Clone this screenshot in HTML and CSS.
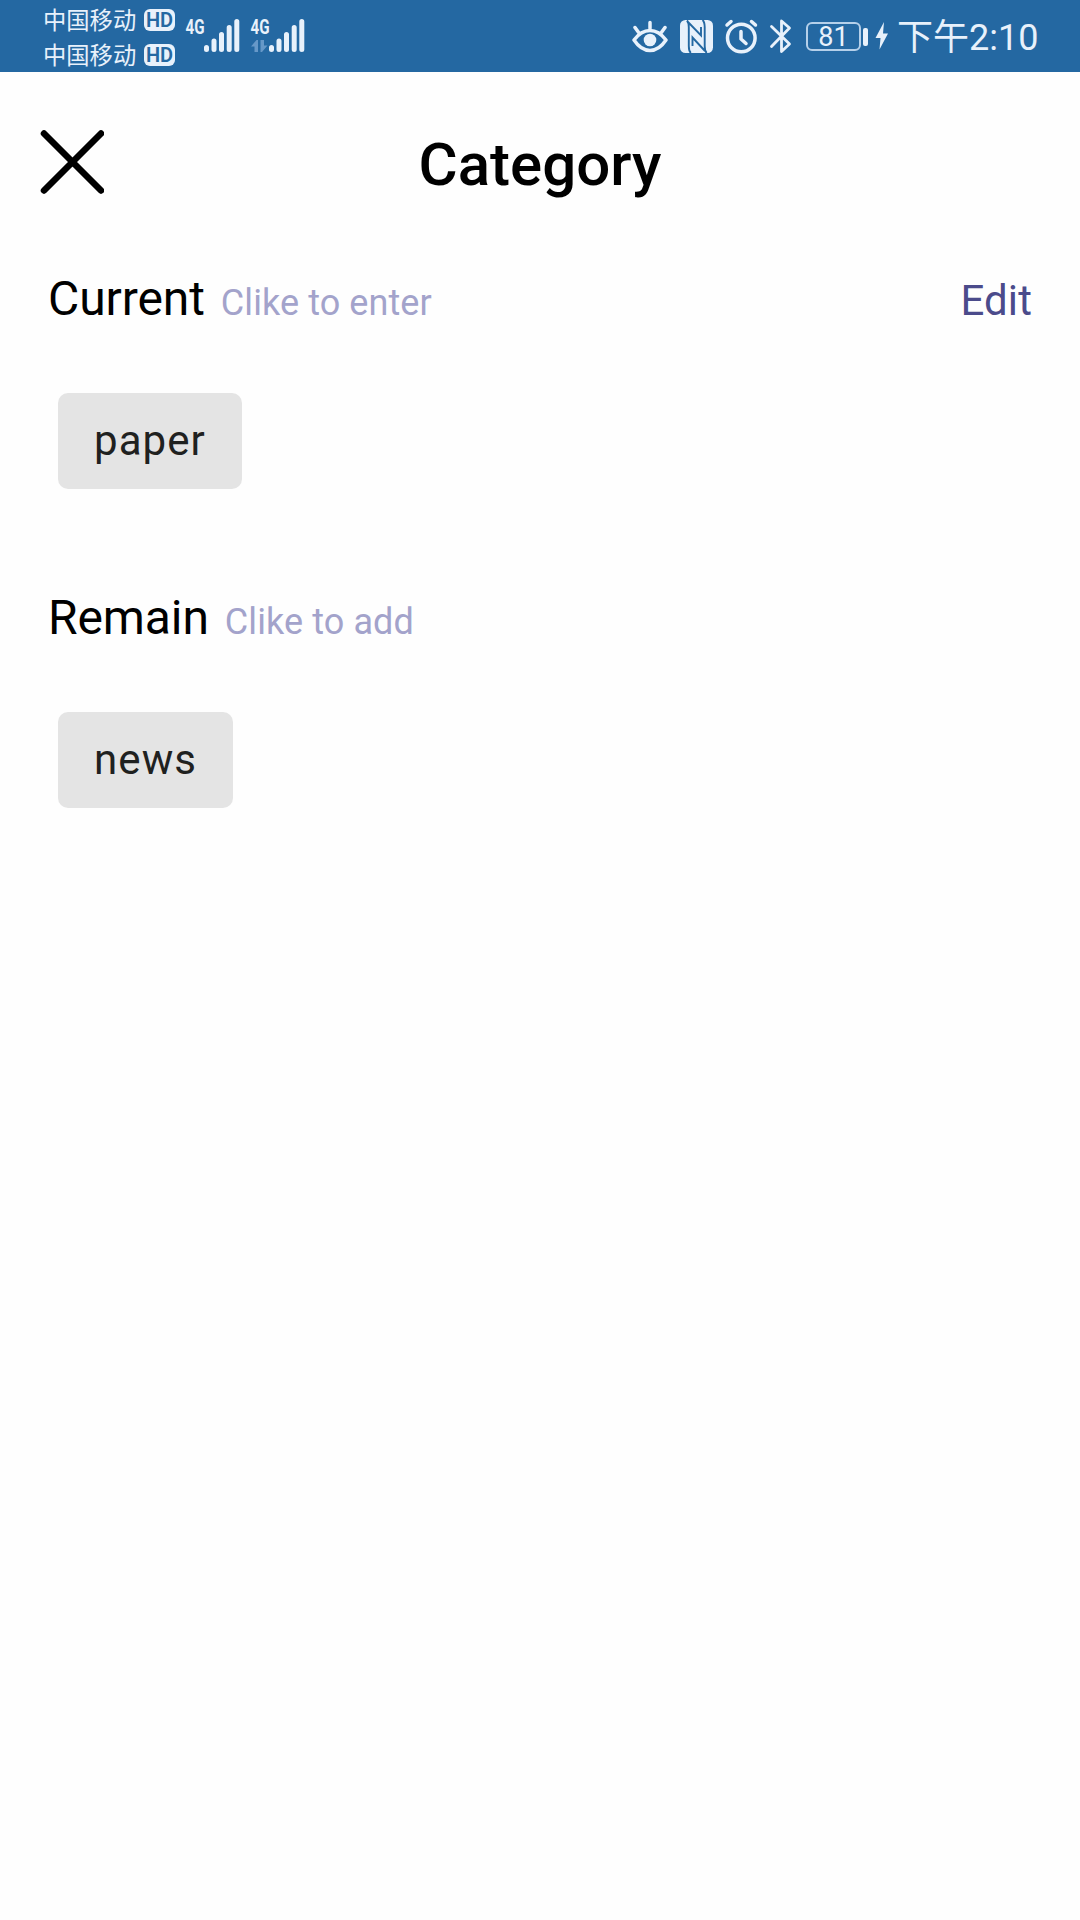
FILE: index.html
```html
<!DOCTYPE html>
<html lang="en">
<head>
<meta charset="utf-8">
<title>Category</title>
<link rel="stylesheet" href="styles.css">
</head>
<body>
<header class="status">
  <div class="carriers">
    <div class="carrier"><span class="carrier-name">中国移动</span><span class="hd"><span class="hd-text">HD</span></span></div>
    <div class="carrier"><span class="carrier-name">中国移动</span><span class="hd"><span class="hd-text">HD</span></span></div>
  </div>
  <svg class="signals" width="120" height="72" viewBox="185 0 120 72">
    <g class="net">
      <text x="185.5" y="33.5" textLength="19" lengthAdjust="spacingAndGlyphs">4G</text>
      <text x="250.5" y="33.5" textLength="19" lengthAdjust="spacingAndGlyphs">4G</text>
    </g>
    <g class="bars">
      <path d="M206.500 47.500v2M214 41v8.500M221.500 34.500v15M229.200 27.500v22M236.800 21.500v28"/>
      <path d="M271.500 47.500v2M279 41v8.500M286.500 34.500v15M294.200 27.500v22M301.800 21.500v28"/>
    </g>
    <path class="traffic" d="M251 46.500l5.500-6.500h1.500v12h-3.500v-5.500zM260.500 40h3.500v5.500h3.500l-5.500 6.500h-1.500z"/>
  </svg>
  <div class="indicators">
    <svg width="36" height="36" viewBox="632 18 36 36">
      <path class="line" d="M634 40Q641 30.500 650 30.500T666 40Q659 50.500 650 50.500T634 40zM650 22.500v6M635 27.500l4 5.500M665 27.500l-4 5.500"/>
      <circle class="solid" cx="650" cy="40" r="6.300"/>
    </svg>
    <svg class="nfc" width="33" height="36" viewBox="680 18 33 36">
      <rect class="solid" x="680" y="20" width="33" height="33" rx="5.500"/>
      <path class="cut" d="M687 20.500q1.800 2 1.800 7V46q0 5 2 7M702.500 20q2.200 2 2.200 7v19q0 5 2 7M688 22l13 13.500V27M705 51L692.500 37.500V46"/>
    </svg>
    <svg class="alarm" width="34" height="36" viewBox="724 18 34 36">
      <circle class="line" cx="741.300" cy="38" r="13.800"/>
      <path class="line" d="M741 31.500v7.500l5 4.500M727 25l4-3.500M755.500 25l-4-3.500"/>
    </svg>
    <svg class="bluetooth" width="23" height="36" viewBox="769 18 23 36">
      <path class="line thin" d="M771.500 26.500l18 17.500-8 7.500V21l8 7-18 18.500"/>
    </svg>
    <div class="battery">81</div>
    <span class="battery-tip"></span>
    <svg class="bolt" width="14" height="28" viewBox="875 23 14 28">
      <path class="solid" d="M884 23L875.500 39h5L879.500 50.500 888 34.500h-5z"/>
    </svg>
    <time class="clock">下午<span class="digits">2:10</span></time>
  </div>
</header>
<nav class="titlebar">
  <svg class="close" width="64" height="64" viewBox="0 0 64 64"><path d="M4 3.500l57 57M61 3.500l-57 57"/></svg>
  <h1 class="title">Category</h1>
</nav>
<main class="content">
  <section class="group">
    <div class="heading"><h2 class="name">Current</h2><span class="hint">Clike to enter</span><a class="edit">Edit</a></div>
    <button class="chip">paper</button>
  </section>
  <section class="group">
    <div class="heading"><h2 class="name">Remain</h2><span class="hint">Clike to add</span></div>
    <button class="chip">news</button>
  </section>
</main>
</body>
</html>
```
FILE: styles.css
```css
* { box-sizing: border-box; }
body {
  margin: 0;
  min-height: 1920px;
  background: #fefefe;
  color: #000;
  font-family: Roboto, "Noto Sans CJK SC", sans-serif;
}
.status {
  display: flex;
  height: 72px;
  padding: 0 41px 0 43px;
  background: #2468a2;
  color: #e8f1fb;
}
.carriers { display: flex; flex-direction: column; gap: 1px; padding-top: 2px; }
.carrier { display: flex; align-items: center; height: 34px; }
.carrier-name {
  width: 101px;
  font: 23.300px/34px "Noto Sans CJK SC", sans-serif;
  white-space: nowrap;
}
.hd {
  display: flex;
  align-items: center;
  justify-content: center;
  width: 31px;
  height: 22px;
  margin-top: 1px;
  border-radius: 6px;
  background: #e8f1fb;
  color: #2468a2;
}
.hd-text { font: 600 20px/22px Roboto, sans-serif; }
.signals { margin-left: 10px; }
.net { fill: #e8f1fb; font: 700 21px Roboto, sans-serif; }
.bars { fill: none; stroke: #e8f1fb; stroke-width: 5; stroke-linecap: round; }
.traffic { fill: #6698c8; }
.indicators { display: flex; align-items: center; margin-left: auto; }
.line { fill: none; stroke: #e8f1fb; stroke-width: 3.500; stroke-linecap: round; stroke-linejoin: round; }
.thin { stroke-width: 2.800; }
.solid { fill: #e8f1fb; }
.cut { fill: none; stroke: #2468a2; stroke-width: 1.900; }
.nfc { margin-left: 12px; }
.alarm { margin-left: 11px; }
.bluetooth { margin-left: 11px; }
.battery {
  width: 55px;
  height: 29px;
  margin: 1px 0 0 14px;
  border: 2px solid #b5d0ea;
  border-radius: 6px;
  font-size: 27px;
  line-height: 27px;
  text-align: center;
}
.battery-tip { width: 5px; height: 18px; margin: 1px 0 0 2px; border-radius: 2px; background: #e8f1fb; }
.bolt { margin-left: 7px; }
.clock {
  width: 142px;
  margin-left: 8px;
  font: 36px/72px "Noto Sans CJK SC", sans-serif;
  white-space: nowrap;
}
.digits { font-family: Roboto, sans-serif; }
.titlebar {
  display: grid;
  grid-template-columns: 64px 1fr 64px;
  align-items: center;
  height: 184px;
  padding: 0 40px;
}
.close { fill: none; stroke: #000; stroke-width: 6.500; stroke-linecap: round; margin-bottom: 4px; }
.title { margin: 0; padding-top: 2px; font-size: 60px; font-weight: 500; line-height: 70px; text-align: center; }
.content { padding: 15px 48px; }
.group { height: 319px; }
.heading { display: flex; align-items: baseline; height: 122px; line-height: 56px; }
.name { margin: 0; font-size: 48px; font-weight: 400; letter-spacing: -.1px; }
.hint { margin-left: 16px; color: #a3a3cb; font-size: 36px; letter-spacing: .09px; }
.edit { margin-left: auto; color: #4b4b8b; font-size: 42px; letter-spacing: .1px; }
.chip {
  display: block;
  height: 96px;
  margin: 0 10px;
  padding: 0 36px;
  border: 0;
  border-radius: 10px;
  background: #e4e4e4;
  color: #1f2120;
  font: 42px/96px Roboto, sans-serif;
  letter-spacing: 1.080px;
}
```
